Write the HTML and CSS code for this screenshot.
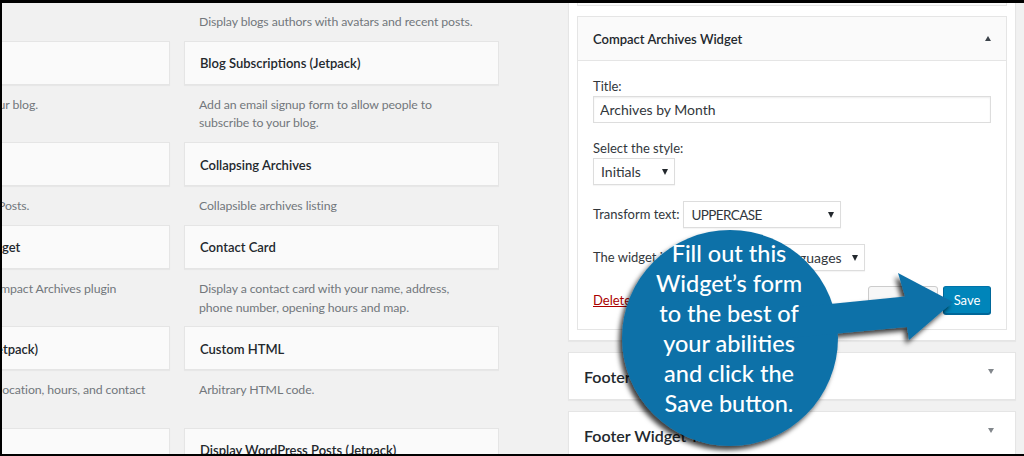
FILE: index.html
```html
<!DOCTYPE html>
<html lang="en">
<head>
<meta charset="utf-8">
<title>Widgets</title>
<link rel="stylesheet" href="styles.css">
</head>
<body>
<div class="screen">
  <div class="available">
    <div class="widget-grid">
      <div class="w"><div class="w-top"><span class="w-title">Archives</span></div><div class="w-desc"></div></div>
      <div class="w"><div class="w-top"><span class="w-title">Authors (Jetpack)</span></div><div class="w-desc">Display blogs authors with avatars and recent posts.</div></div>

      <div class="w"><div class="w-top"><span class="w-title">Blog Stats (Jetpack)</span></div><div class="w-desc">Show a hit counter of your blog.</div></div>
      <div class="w"><div class="w-top"><span class="w-title">Blog Subscriptions (Jetpack)</span></div><div class="w-desc">Add an email signup form to allow people to subscribe to your blog.</div></div>

      <div class="w"><div class="w-top"><span class="w-title">Calendar</span></div><div class="w-desc">A calendar of your site’s Posts.</div></div>
      <div class="w"><div class="w-top"><span class="w-title">Collapsing Archives</span></div><div class="w-desc">Collapsible archives listing</div></div>

      <div class="w"><div class="w-top"><span class="w-title">Compact Archives Widget</span></div><div class="w-desc">Shows the widget for Compact Archives plugin</div></div>
      <div class="w"><div class="w-top"><span class="w-title">Contact Card</span></div><div class="w-desc">Display a contact card with your name, address, phone number, opening hours and map.</div></div>

      <div class="w"><div class="w-top"><span class="w-title">Contact Info &amp; Map (Jetpack)</span></div><div class="w-desc">Display a map with your location, hours, and contact information.</div></div>
      <div class="w"><div class="w-top"><span class="w-title">Custom HTML</span></div><div class="w-desc">Arbitrary HTML code.</div></div>

      <div class="w"><div class="w-top"><span class="w-title">Custom Menu</span></div><div class="w-desc"></div></div>
      <div class="w"><div class="w-top"><span class="w-title">Display WordPress Posts (Jetpack)</span></div><div class="w-desc"></div></div>
    </div>
  </div>

  <div class="sidebars">
    <div class="sidebar open">
      <div class="widget prev">
        <div class="widget-top"><span class="widget-title">Recent Posts</span><span class="tri-down"></span></div>
      </div>
      <div class="widget">
        <div class="widget-top"><span class="widget-title">Compact Archives Widget</span><span class="tri-up"></span></div>
        <div class="widget-inside">
          <div class="field first">
            <div class="label">Title:</div>
            <input class="input" type="text" value="Archives by Month">
          </div>
          <div class="field">
            <div class="label">Select the style:</div>
            <div class="select sel-style"><span>Initials</span><span class="tri-sel"></span></div>
          </div>
          <div class="field row">
            <span class="label">Transform text:</span>
            <div class="select sel-transform"><span class="caps">UPPERCASE</span><span class="tri-sel"></span></div>
          </div>
          <div class="field row">
            <span class="label">The widget is displayed for:</span>
            <div class="select sel-lang"><span>All languages</span><span class="tri-sel"></span></div>
          </div>
          <div class="actions">
            <a class="delete" href="#">Delete</a>
            <div class="buttons">
              <span class="btn-secondary"></span>
              <span class="btn-primary">Save</span>
            </div>
          </div>
        </div>
      </div>
    </div>

    <div class="sidebar closed">
      <div class="sidebar-name"><h2>Footer Widget Two</h2><span class="tri-down light"></span></div>
    </div>
    <div class="sidebar closed">
      <div class="sidebar-name"><h2>Footer Widget Three</h2><span class="tri-down light"></span></div>
    </div>
  </div>
</div>

<svg class="callout-shape" width="1024" height="456" viewBox="0 0 1024 456" aria-hidden="true">
  <defs>
    <filter id="shadow" x="-20%" y="-20%" width="140%" height="140%">
      <feDropShadow dx="-3" dy="4" stdDeviation="2.5" flood-color="#000" flood-opacity="0.75"/>
    </filter>
  </defs>
  <g filter="url(#shadow)" fill="#1071a8">
    <circle cx="730" cy="338" r="108"/>
    <polygon points="790,308 905,296.5 898,273 953,302 909,340 907,327 790,338"/>
  </g>
</svg>
<div class="callout-text">Fill out this<br>Widget’s form<br>to the best of<br>your abilities<br>and click the<br>Save button.</div>
</body>
</html>
```

FILE: styles.css
```css
* { box-sizing: border-box; }

body {
  margin: 0;
  height: 456px;
  padding: 3px 0 2px 2px;
  background: #000;
  overflow: hidden;
  font-family: Lato, "Open Sans", sans-serif;
  font-size: 13px;
  color: #32373c;
}

.screen {
  height: 451px;
  background: #f1f1f1;
  overflow: hidden;
  display: flex;
  align-items: flex-start;
}

/* ---------- available widgets ---------- */
.available {
  width: 497px;
  flex: none;
  overflow: hidden;
}

.widget-grid {
  display: grid;
  grid-template-columns: 315px 315px;
  column-gap: 14px;
  margin: -45px 0 0 -147px;
}

.w-top {
  height: 44px;
  border: 1px solid #e5e5e5;
  background: #fafafa;
  box-shadow: 0 1px 1px rgba(0, 0, 0, 0.04);
  padding: 1px 15px 0;
  display: flex;
  align-items: center;
}

.w-title {
  font-weight: 600;
  font-size: 13px;
  color: #23282d;
  white-space: nowrap;
}

.w-desc {
  padding: 11px 15px 9px;
  font-size: 12.3px;
  letter-spacing: -0.1px;
  line-height: 18.7px;
  color: #72777c;
}

/* ---------- sidebars ---------- */
.sidebars {
  width: 448px;
  margin-left: 69px;
  flex: none;
}

.sidebar {
  background: #fff;
  border: 1px solid #e5e5e5;
  box-shadow: 0 1px 1px rgba(0, 0, 0, 0.04);
}

.sidebar.open {
  border-top: 0;
  padding: 0 8px;
}

.sidebar.closed {
  margin-top: 11px;
  height: 48px;
}

.sidebar-name {
  height: 46px;
  padding: 0 21px 0 15px;
  display: flex;
  align-items: center;
  justify-content: space-between;
}

.sidebar-name h2 {
  margin: 0;
  font-size: 16px;
  font-weight: 600;
  color: #23282d;
}

.sidebar-name .tri-down { margin-top: -9px; }

.widget {
  border: 1px solid #e5e5e5;
  background: #fff;
  margin-bottom: 10px;
}

.widget.prev { margin-top: -42px; }

.widget-top {
  height: 43px;
  background: #fafafa;
  padding: 0 15px;
  display: flex;
  align-items: center;
  justify-content: space-between;
}

.widget-title {
  font-weight: 600;
  font-size: 13px;
  color: #23282d;
}

.tri-up {
  width: 0;
  height: 0;
  border-left: 3.5px solid transparent;
  border-right: 3.5px solid transparent;
  border-bottom: 5px solid #3c434a;
  margin-right: 0.5px;
}

.tri-down {
  width: 0;
  height: 0;
  border-left: 3.5px solid transparent;
  border-right: 3.5px solid transparent;
  border-top: 5px solid #3c434a;
}

.tri-down.light { border-top-color: #82878c; }

.widget-inside {
  border-top: 1px solid #e5e5e5;
  padding: 0 15px 15px;
}

.field { margin-top: 16px; }

.field.row {
  display: flex;
  align-items: center;
}

.label {
  line-height: 19px;
  color: #32373c;
}

.field.row .label { margin-right: 4px; }

.input {
  display: block;
  width: 100%;
  height: 27px;
  margin: 0;
  border: 1px solid #ddd;
  box-shadow: inset 0 1px 2px rgba(0, 0, 0, 0.07);
  padding: 0 6px;
  font-family: Lato, "Open Sans", sans-serif;
  font-size: 14px;
  color: #32373c;
  background: #fff;
}

.select {
  height: 27px;
  border: 1px solid #ddd;
  box-shadow: 0 1px 1px rgba(0, 0, 0, 0.04);
  background: #fff;
  display: flex;
  align-items: center;
  justify-content: space-between;
  padding: 0 6px 0 7px;
  font-size: 14px;
  color: #32373c;
}

.caps { letter-spacing: -0.6px; font-size: 13.5px; }

.sel-style { width: 82px; }
.sel-transform { width: 158px; }
.sel-lang { padding-left: 8px; }
.sel-lang .tri-sel { margin-left: 10px; }

.tri-sel {
  width: 0;
  height: 0;
  border-left: 3.5px solid transparent;
  border-right: 3.5px solid transparent;
  border-top: 6px solid #23282d;
}

.actions {
  margin-top: 15px;
  height: 28px;
  display: flex;
  align-items: center;
  justify-content: space-between;
}

.delete {
  color: #a00;
  text-decoration: underline;
}

.buttons {
  display: flex;
  gap: 5px;
}

.btn-secondary {
  width: 70px;
  height: 28px;
  border: 1px solid #ccc;
  border-radius: 3px;
  background: #f7f7f7;
  box-shadow: 0 1px 0 #ccc;
}

.btn-primary {
  width: 48px;
  height: 28px;
  border: 1px solid #0073aa;
  border-color: #0073aa #006799 #006799;
  border-radius: 3px;
  background: #0085ba;
  box-shadow: 0 1px 0 #006799;
  color: #fff;
  font-size: 13px;
  display: flex;
  align-items: center;
  justify-content: center;
}

/* ---------- callout ---------- */
.callout-shape {
  position: absolute;
  left: 0;
  top: 0;
  pointer-events: none;
}

.callout-text {
  position: absolute;
  left: 629px;
  top: 238px;
  width: 200px;
  text-align: center;
  font-family: Lato, "Open Sans", sans-serif;
  font-size: 23.5px;
  font-weight: 500;
  line-height: 30px;
  color: #fff;
}
```
